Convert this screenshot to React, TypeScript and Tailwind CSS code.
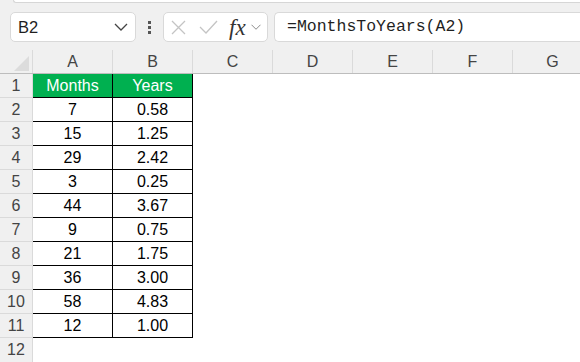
const rows: [string, string][] = [
  ["7", "0.58"],
  ["15", "1.25"],
  ["29", "2.42"],
  ["3", "0.25"],
  ["44", "3.67"],
  ["9", "0.75"],
  ["21", "1.75"],
  ["36", "3.00"],
  ["58", "4.83"],
  ["12", "1.00"],
];

const cols = ["A", "B", "C", "D", "E", "F", "G"];

function Chevron({ className }: { className?: string }) {
  return (
    <svg className={className} width="14" height="8" viewBox="0 0 14 8" fill="none">
      <path d="M1 1l6 6 6-6" stroke="currentColor" strokeWidth="1.3" />
    </svg>
  );
}

export default function App() {
  return (
    <div className="h-[362px] w-[580px] overflow-hidden bg-[#f0f0f0] font-['Liberation_Sans',Arial,sans-serif]">
      {/* ribbon edge */}
      <div className="ml-[13px] h-[3px] rounded-bl-[5px] border-b border-l border-[#d6d6d6] bg-white" />

      {/* formula bar */}
      <div className="mt-[9px] flex h-[30px] items-stretch">
        <div className="ml-[10px] flex w-[126px] items-center rounded-[5px] border border-[#d9d9d9] bg-white pl-[7px] pr-[7px] text-[16.5px] text-[#1f1f1f]">
          <span className="flex-1">B2</span>
          <Chevron className="text-[#444]" />
        </div>
        <div className="flex w-[27px] flex-col items-center justify-center gap-[2px]">
          <span className="h-[3px] w-[3px] bg-[#555]" />
          <span className="h-[3px] w-[3px] bg-[#555]" />
          <span className="h-[3px] w-[3px] bg-[#555]" />
        </div>
        <div className="flex w-[105px] items-center rounded-[5px] border border-[#d9d9d9] bg-white pl-[7px]">
          <svg width="15" height="15" viewBox="0 0 15 15" fill="none" className="text-[#c4c4c4]">
            <path d="M1 1l13 13M14 1L1 14" stroke="currentColor" strokeWidth="1.3" />
          </svg>
          <svg width="19" height="14" viewBox="0 0 19 14" fill="none" className="ml-[13px] text-[#c4c4c4]">
            <path d="M1 7l6 6L18 1" stroke="currentColor" strokeWidth="1.3" />
          </svg>
          <span className="ml-[11px] font-['Liberation_Serif',serif] text-[23px] italic leading-none text-[#333]">
            fx
          </span>
          <Chevron className="ml-[3px] scale-75 text-[#888]" />
        </div>
        <div className="ml-[6px] flex flex-1 items-center rounded-l-[5px] border border-r-0 border-[#d9d9d9] bg-white pl-[12px] font-['Liberation_Mono',monospace] text-[16.5px] text-[#1f1f1f]">
          =MonthsToYears(A2)
        </div>
      </div>

      {/* column headers */}
      <div className="mt-[8px] flex h-[24px] border-b border-[#bdbdbd] text-[16px] text-[#444]">
        <div className="relative w-[33px] shrink-0 border-r border-[#dadada]">
          <svg className="absolute bottom-[2px] right-[3px]" width="15" height="15" viewBox="0 0 15 15">
            <path d="M15 0V15H0Z" fill="#dcdcdc" />
          </svg>
        </div>
        {cols.map((c) => (
          <div
            key={c}
            className="flex w-[80px] shrink-0 items-center justify-center border-r border-[#dadada]"
          >
            {c}
          </div>
        ))}
      </div>

      {/* grid */}
      <div className="flex flex-col bg-white">
        {[["Months", "Years"] as [string, string], ...rows].map((r, i) => (
          <div key={i} className="flex h-[24px]">
            <div className="flex w-[33px] shrink-0 items-center justify-center border-b border-r border-[#dadada] bg-[#f0f0f0] text-[16px] text-[#444]">
              {i + 1}
            </div>
            {r.map((v, j) => (
              <div
                key={j}
                className={`flex w-[80px] shrink-0 items-center justify-center border-b border-r border-black text-[16px] ${
                  i === 0 ? "bg-[#00b050] text-white" : "bg-white text-black"
                }`}
              >
                {v}
              </div>
            ))}
          </div>
        ))}
        <div className="flex h-[24px]">
          <div className="flex w-[33px] shrink-0 items-center justify-center border-r border-[#dadada] bg-[#f0f0f0] text-[16px] text-[#444]">
            12
          </div>
        </div>
      </div>
    </div>
  );
}
